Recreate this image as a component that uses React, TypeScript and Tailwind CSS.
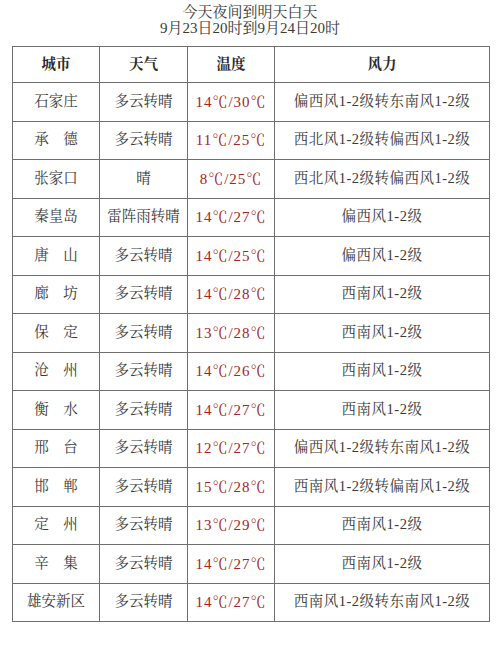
import React from "react";

const rows: [string, string, string, string][] = [
  ["石家庄", "多云转晴", "14℃/30℃", "偏西风1-2级转东南风1-2级"],
  ["承　德", "多云转晴", "11℃/25℃", "西北风1-2级转偏西风1-2级"],
  ["张家口", "晴", "8℃/25℃", "西北风1-2级转偏西风1-2级"],
  ["秦皇岛", "雷阵雨转晴", "14℃/27℃", "偏西风1-2级"],
  ["唐　山", "多云转晴", "14℃/25℃", "偏西风1-2级"],
  ["廊　坊", "多云转晴", "14℃/28℃", "西南风1-2级"],
  ["保　定", "多云转晴", "13℃/28℃", "西南风1-2级"],
  ["沧　州", "多云转晴", "14℃/26℃", "西南风1-2级"],
  ["衡　水", "多云转晴", "14℃/27℃", "西南风1-2级"],
  ["邢　台", "多云转晴", "12℃/27℃", "偏西风1-2级转东南风1-2级"],
  ["邯　郸", "多云转晴", "15℃/28℃", "西南风1-2级转偏南风1-2级"],
  ["定　州", "多云转晴", "13℃/29℃", "西南风1-2级"],
  ["辛　集", "多云转晴", "14℃/27℃", "西南风1-2级"],
  ["雄安新区", "多云转晴", "14℃/27℃", "西南风1-2级转东南风1-2级"],
];

const font = {
  fontFamily:
    '"Liberation Serif", "Noto Serif CJK SC", "AR PL UMing CN", "Noto Sans CJK SC", serif',
};

export default function App() {
  return (
    <div className="w-[500px] h-[646px] bg-white text-[#3a3a3a]" style={font}>
      <div className="pt-[4px] flex flex-col items-center text-[15px] leading-[16px]">
        <div>今天夜间到明天白天</div>
        <div>9月23日20时到9月24日20时</div>
      </div>
      <div className="mt-[10px] ml-[12px] w-[478px]">
        <table className="w-full border-collapse table-fixed text-[14.5px]">
          <colgroup>
            <col className="w-[87px]" />
            <col className="w-[88px]" />
            <col className="w-[87px]" />
            <col />
          </colgroup>
          <thead>
            <tr className="h-[36px]">
              {["城市", "天气", "温度", "风力"].map((h) => (
                <th
                  key={h}
                  className="border-[1.5px] border-[#6f6f6f] font-bold text-[#2a2a2a] text-center p-0"
                >
                  {h}
                </th>
              ))}
            </tr>
          </thead>
          <tbody>
            {rows.map((r) => (
              <tr key={r[0]} className="h-[38.5px]">
                <td className="border-[1.5px] border-[#6f6f6f] text-center p-0 whitespace-nowrap">
                  {r[0]}
                </td>
                <td className="border-[1.5px] border-[#6f6f6f] text-center p-0 whitespace-nowrap">
                  {r[1]}
                </td>
                <td className="border-[1.5px] border-[#6f6f6f] text-center p-0 whitespace-nowrap text-[#a52424] text-[15px] tracking-[1px]">
                  {r[2]}
                </td>
                <td className="border-[1.5px] border-[#6f6f6f] text-center p-0 whitespace-nowrap tracking-[0.5px]">
                  {r[3]}
                </td>
              </tr>
            ))}
          </tbody>
        </table>
      </div>
    </div>
  );
}
